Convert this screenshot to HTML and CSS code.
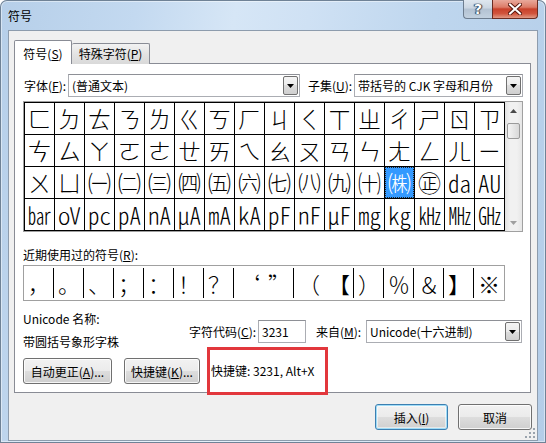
FILE: index.html
```html
<!DOCTYPE html>
<html lang="zh-CN">
<head>
<meta charset="utf-8">
<title>符号</title>
<link rel="stylesheet" href="styles.css">
</head>
<body>
<div class="window">
  <div class="titlebar">
    <span class="title">符号</span>
    <div class="caption">
      <div class="cap-help">?</div>
      <div class="cap-close">
        <svg width="14" height="12" viewBox="0 0 14 12"><path d="M2 1.5 L12 10.5 M12 1.5 L2 10.5" stroke="#5a1a10" stroke-width="4" stroke-linecap="square"/><path d="M2 1.5 L12 10.5 M12 1.5 L2 10.5" stroke="#ffffff" stroke-width="2" stroke-linecap="square"/></svg>
      </div>
    </div>
  </div>
  <div class="client">
    <div class="tabs">
      <div class="tab active">符号(<u>S</u>)</div>
      <div class="tab">特殊字符(<u>P</u>)</div>
    </div>
    <div class="panel">
      <div class="font-row">
        <span class="lbl lbl-font">字体(<u>F</u>):</span>
        <div class="combo combo-font"><span class="val">(普通文本)</span><span class="dd"><svg width="7" height="4" viewBox="0 0 7 4"><path d="M0 0 H7 L3.5 4 Z" fill="#000"/></svg></span></div>
        <span class="lbl lbl-subset">子集(<u>U</u>):</span>
        <div class="combo combo-subset"><span class="val">带括号的 CJK 字母和月份</span><span class="dd"><svg width="7" height="4" viewBox="0 0 7 4"><path d="M0 0 H7 L3.5 4 Z" fill="#000"/></svg></span></div>
      </div>
      <div class="charframe">
        <div class="charmap">
          <span>ㄈ</span><span>ㄉ</span><span>ㄊ</span><span>ㄋ</span><span>ㄌ</span><span>ㄍ</span><span>ㄎ</span><span>ㄏ</span><span>ㄐ</span><span>ㄑ</span><span>ㄒ</span><span>ㄓ</span><span>ㄔ</span><span>ㄕ</span><span>ㄖ</span><span>ㄗ</span>
          <span>ㄘ</span><span>ㄙ</span><span>ㄚ</span><span>ㄛ</span><span>ㄜ</span><span>ㄝ</span><span>ㄞ</span><span>ㄟ</span><span>ㄠ</span><span>ㄡ</span><span>ㄢ</span><span>ㄣ</span><span>ㄤ</span><span>ㄥ</span><span>ㄦ</span><span>ㄧ</span>
          <span>ㄨ</span><span>ㄩ</span><span>㈠</span><span>㈡</span><span>㈢</span><span>㈣</span><span>㈤</span><span>㈥</span><span>㈦</span><span>㈧</span><span>㈨</span><span>㈩</span><span class="sel">㈱</span><span>㊣</span><span>㍲</span><span>㍳</span>
          <span>㍴</span><span>㍵</span><span>㍶</span><span>㎀</span><span>㎁</span><span>㎂</span><span>㎃</span><span>㎄</span><span>㎊</span><span>㎋</span><span>㎌</span><span>㎎</span><span>㎏</span><span>㎑</span><span>㎒</span><span>㎓</span>
        </div>
        <div class="vscroll">
          <div class="arrow"><svg width="7" height="4" viewBox="0 0 7 4"><path d="M0 4 H7 L3.5 0 Z" fill="#4a4a4a"/></svg></div>
          <div class="thumb"></div>
          <div class="track"></div>
          <div class="arrow"><svg width="7" height="4" viewBox="0 0 7 4"><path d="M0 0 H7 L3.5 4 Z" fill="#a0a0a0"/></svg></div>
        </div>
      </div>
      <div class="lbl recent-lbl">近期使用过的符号(<u>R</u>):</div>
      <div class="recent">
        <span>，</span><span>。</span><span>、</span><span>；</span><span>：</span><span>！</span><span>？</span><span class="nosep">‘</span><span>”</span><span class="nosep">（</span><span>【</span><span>）</span><span>％</span><span>＆</span><span>】</span><span class="nosep">※</span>
      </div>
      <div class="info-row">
        <div class="info-left">
          <div class="lbl">Unicode 名称:</div>
          <div class="lbl name">带圆括号象形字株</div>
        </div>
        <div class="info-right">
          <span class="lbl lbl-code">字符代码(<u>C</u>):</span>
          <div class="field">3231</div>
          <span class="lbl lbl-from">来自(<u>M</u>):</span>
          <div class="combo combo-from"><span class="val">Unicode(十六进制)</span><span class="dd"><svg width="7" height="4" viewBox="0 0 7 4"><path d="M0 0 H7 L3.5 4 Z" fill="#000"/></svg></span></div>
        </div>
      </div>
      <div class="btn-row">
        <div class="btn btn-auto">自动更正(<u>A</u>)...</div>
        <div class="btn btn-key">快捷键(<u>K</u>)...</div>
        <span class="lbl shortcut">快捷键: 3231, Alt+X</span>
      </div>
    </div>
    <div class="footer">
      <div class="btn btn-insert">插入(<u>I</u>)</div>
      <div class="btn btn-cancel">取消</div>
    </div>
  </div>
  <div class="highlight"></div>
  <svg class="grip" width="11" height="11" viewBox="0 0 11 11">
    <g fill="#9aa3ad"><rect x="8" y="0" width="2" height="2"/><rect x="8" y="4" width="2" height="2"/><rect x="4" y="4" width="2" height="2"/><rect x="8" y="8" width="2" height="2"/><rect x="4" y="8" width="2" height="2"/><rect x="0" y="8" width="2" height="2"/></g>
  </svg>
</div>
</body>
</html>
```
FILE: styles.css
```css
html, body {
  margin: 0;
  padding: 0;
  background: #ffffff;
}
body {
  font-family: "Noto Sans CJK SC", "Noto Sans", sans-serif;
  font-size: 12px;
  color: #000;
}
u { text-decoration: underline; text-underline-offset: 1px; }

.window {
  position: relative;
  width: 546px;
  height: 443px;
  box-sizing: border-box;
  border-radius: 7px 7px 0 0;
  background: linear-gradient(100deg, #b6cfe9 0%, #c3d9f0 22%, #d6e6f6 38%, #cfe1f4 50%, #bed6ee 70%, #b4cde8 100%);
  box-shadow: inset 0 0 0 1px #6f8296, inset 0 0 0 2px rgba(255,255,255,0.45);
  overflow: hidden;
}

.titlebar {
  height: 30px;
  display: flex;
  align-items: center;
}
.title {
  flex: 1;
  padding-left: 8px;
  font-size: 12px;
  line-height: 16px;
  padding-top: 1px;
}
.caption {
  align-self: flex-start;
  display: flex;
  margin-right: 8px;
  height: 19px;
}
.cap-help {
  width: 29px;
  height: 19px;
  box-sizing: border-box;
  border: 1px solid #6d7d8f;
  border-top: none;
  border-right: none;
  border-radius: 0 0 0 4px;
  background: linear-gradient(#dfe7ef 0%, #cbd6e2 45%, #b3c2d2 50%, #c2d1e0 100%);
  color: #fff;
  font: bold 14px/18px "DejaVu Sans", sans-serif;
  text-align: center;
  text-shadow: 0 0 1px #2a3a4c, 0 0 1px #2a3a4c, 1px 0 1px #2a3a4c, -1px 0 1px #2a3a4c;
}
.cap-close {
  width: 46px;
  height: 19px;
  box-sizing: border-box;
  border: 1px solid #6a2c22;
  border-top: none;
  border-radius: 0 0 4px 0;
  background: linear-gradient(#e9a99b 0%, #dc7b67 40%, #c8412b 50%, #d1543c 75%, #e19a85 100%);
  display: flex;
  align-items: center;
  justify-content: center;
}

.client {
  margin: 0 8px;
  height: 411px;
  box-sizing: border-box;
  border: 1px solid #8d9cad;
  background: #f0f0f0;
}

.tabs {
  display: flex;
  align-items: flex-end;
  padding: 9px 0 0 5px;
  position: relative;
  z-index: 1;
  margin-bottom: -1px;
}
.tab {
  box-sizing: border-box;
  height: 21px;
  width: 78px;
  border: 1px solid #898c95;
  border-left: none;
  border-bottom: none;
  background: linear-gradient(#f2f2f2, #e3e3e3 50%, #d9d9d9 100%);
  text-align: center;
  line-height: 20px;
  border-radius: 2px 2px 0 0;
}
.tab.active {
  width: 58px;
  height: 24px;
  border-left: 1px solid #898c95;
  background: #ffffff;
  line-height: 26px;
}

.panel {
  margin-left: 5px;
  width: 517px;
  box-sizing: border-box;
  border: 1px solid #898c95;
  background: #ffffff;
  padding-bottom: 8px;
}

.lbl {
  font-size: 12px;
  line-height: 16px;
  white-space: nowrap;
}

.font-row {
  display: flex;
  align-items: center;
  margin-top: 10px;
  padding-left: 9px;
}
.lbl-font { width: 44px; }
.lbl-subset { width: 46px; margin-left: 8px; }

.combo {
  display: flex;
  align-items: center;
  height: 23px;
  box-sizing: border-box;
  border: 1px solid #abadb3;
  border-top-color: #8e9096;
  background: #fff;
}
.combo .val {
  flex: 1;
  padding-left: 3px;
  white-space: nowrap;
}
.combo .dd {
  width: 15px;
  height: 19px;
  margin-right: 1px;
  box-sizing: border-box;
  border: 1px solid #707070;
  border-radius: 2px;
  background: linear-gradient(#f4f4f4, #ebebeb 50%, #dddddd 50%, #cfcfcf);
  display: flex;
  align-items: center;
  justify-content: center;
}
.combo-font { width: 232px; }
.combo-subset { width: 169px; }
.combo-from { width: 156px; }

.charframe {
  display: flex;
  width: fit-content;
  margin: 4px 0 0 8px;
  border: 1px solid #a0a0a0;
}
.charmap {
  display: grid;
  grid-template-columns: repeat(16, 29px);
  grid-auto-rows: 31px;
  gap: 1px;
  padding: 1px;
  background: #000;
}
.charmap span {
  background: #fff;
  display: flex;
  align-items: center;
  justify-content: center;
  font-family: "Noto Sans CJK SC", sans-serif;
  font-size: 23px;
  font-weight: 300;
  line-height: 29px;
}
.charmap span.sel {
  background: #3399ff;
  color: #fff;
  outline: 1px dotted #222;
  outline-offset: -1px;
}

.vscroll {
  width: 17px;
  display: flex;
  flex-direction: column;
  background: linear-gradient(90deg, #e2e2e2, #f1f1f1 30%, #f1f1f1 70%, #e6e6e6);
}
.vscroll .arrow {
  height: 17px;
  display: flex;
  align-items: center;
  justify-content: center;
}
.vscroll .thumb {
  margin: 4px 2px 0 2px;
  height: 16px;
  box-sizing: border-box;
  border: 1px solid #9a9a9a;
  border-radius: 2px;
  background: linear-gradient(90deg, #f4f4f4, #e6e6e6 50%, #d8d8d8);
}
.vscroll .track { flex: 1; }

.recent-lbl {
  margin: 15px 0 0 8px;
}
.recent {
  display: flex;
  margin: 2px 0 0 8px;
  width: 482px;
  height: 36px;
  box-sizing: border-box;
  border: 1px solid #a0a0a0;
}
.recent span {
  position: relative;
  width: 30px;
  display: flex;
  align-items: center;
  justify-content: center;
  font-family: "Noto Sans CJK SC", sans-serif;
  font-size: 22px;
  font-weight: 300;
  line-height: 30px;
}
.recent span::after {
  content: "";
  position: absolute;
  right: 0;
  top: 2px;
  bottom: 2px;
  width: 1px;
  background: #000;
}
.recent span.nosep::after { display: none; }

.info-row {
  display: flex;
  margin-top: 10px;
}
.info-left {
  width: 166px;
  padding-left: 8px;
}
.info-left .name { margin-top: 7px; }
.info-right {
  display: flex;
  align-items: center;
  margin-top: 9px;
  height: 23px;
}
.lbl-code { width: 69px; }
.lbl-from { width: 50px; margin-left: 10px; }
.field {
  width: 48px;
  height: 23px;
  box-sizing: border-box;
  border: 1px solid #abadb3;
  border-top-color: #8e9096;
  background: #fff;
  padding-left: 3px;
  line-height: 21px;
}

.btn-row {
  display: flex;
  align-items: center;
  margin-top: 8px;
  padding-left: 8px;
}
.btn {
  height: 26px;
  box-sizing: border-box;
  border: 1px solid #707070;
  border-radius: 3px;
  background: linear-gradient(#f2f2f2 0%, #ebebeb 48%, #dddddd 52%, #cfcfcf 100%);
  box-shadow: inset 0 0 0 1px rgba(255,255,255,0.8);
  display: flex;
  align-items: center;
  justify-content: center;
  white-space: nowrap;
}
.btn-auto { width: 89px; margin-right: 12px; }
.btn-key { width: 76px; }
.shortcut { margin-left: 11px; }

.footer {
  display: flex;
  justify-content: flex-end;
  gap: 10px;
  margin-top: 11px;
  padding-right: 5px;
}
.btn-insert {
  width: 73px;
  border-color: #3c7fb1;
  box-shadow: inset 0 0 0 1px #9fdcf7, inset 0 0 0 2px rgba(255,255,255,0.5);
}
.btn-cancel { width: 74px; }

.highlight {
  position: absolute;
  left: 207px;
  top: 347px;
  width: 121px;
  height: 48px;
  box-sizing: border-box;
  border: 3px solid #e2373c;
}
.grip {
  position: absolute;
  right: 10px;
  bottom: 4px;
}
```
